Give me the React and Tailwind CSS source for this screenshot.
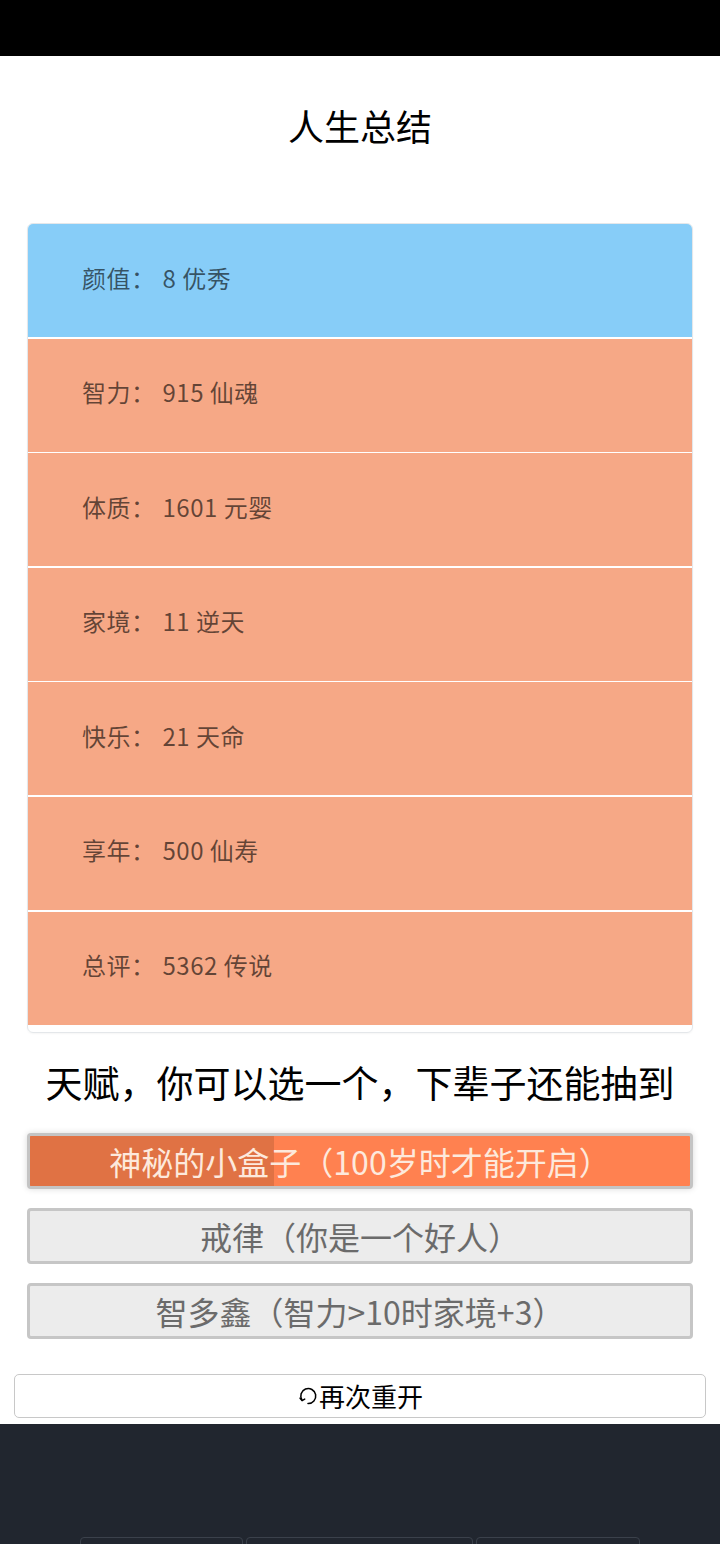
import React from "react";

const font = { fontFamily: '"Noto Sans CJK SC", "Noto Sans", sans-serif' };

const stats = [
  { label: "颜值", value: "8 优秀", blue: true },
  { label: "智力", value: "915 仙魂" },
  { label: "体质", value: "1601 元婴" },
  { label: "家境", value: "11 逆天" },
  { label: "快乐", value: "21 天命" },
  { label: "享年", value: "500 仙寿" },
  { label: "总评", value: "5362 传说" },
];

const talents = [
  { name: "戒律（你是一个好人）" },
  { name: "智多鑫（智力>10时家境+3）" },
];

function RefreshIcon() {
  return (
    <svg width="22" height="22" viewBox="0 0 20 20" fill="none" stroke="currentColor" strokeWidth="1.4">
      <path d="M4.6 13.8 A6.8 6.8 0 1 1 10 16.8" strokeLinecap="round" />
      <path d="M2.8 12 L4.6 14.2 L7 12.8" strokeLinecap="round" strokeLinejoin="round" />
    </svg>
  );
}

export default function App() {
  return (
    <div className="w-[720px] h-[1544px] overflow-hidden bg-white flex flex-col" style={font}>
      {/* status bar */}
      <div className="h-[56px] bg-black shrink-0" />

      <div className="flex-1 flex flex-col">
        <h1 className="mt-[42px] text-center text-[36px] leading-[54px] text-black font-normal">人生总结</h1>

        {/* summary card */}
        <div className="mt-[71px] mx-[27px] border border-[#e4e7ea] rounded-[6px] overflow-hidden pb-[7px] shadow-[0_1px_2px_rgba(0,0,0,0.04)]">
          <div className="flex flex-col gap-[1.6px]">
            {stats.map((s) => (
              <div
                key={s.label}
                className={
                  "h-[113px] flex items-center pl-[54px] pb-[6px] text-[24px] tracking-[0.5px] text-black/60 " +
                  (s.blue ? "bg-[#87cdf8]" : "bg-[#f6a886]")
                }
              >
                {s.label}：<span className="ml-[7px]">{s.value}</span>
              </div>
            ))}
          </div>
        </div>

        <div className="mt-[22px] text-center text-[37px] leading-[54px] text-black">
          天赋，你可以选一个，下辈子还能抽到
        </div>

        {/* talents */}
        <div className="mt-[24px] mx-[27px] flex flex-col gap-[19px]">
          <div className="relative h-[56px] border-[3px] border-[#c4c4c4] rounded-[4px] bg-[#ff8150] overflow-hidden shadow-[0_0_6px_rgba(0,0,0,0.15)]">
            <div className="absolute left-0 top-0 bottom-0 w-[244px] bg-[#e07244]" />
            <div className="relative h-full flex items-center justify-center text-[32px] text-[#fde9dc]">
              神秘的小盒子（100岁时才能开启）
            </div>
          </div>
          {talents.map((t) => (
            <div
              key={t.name}
              className="h-[56px] border-[3px] border-[#c6c6c6] rounded-[4px] bg-[#ececec] flex items-center justify-center text-[32px] text-[#6b6b6b]"
            >
              {t.name}
            </div>
          ))}
        </div>

        {/* restart */}
        <div className="mt-[35px] mx-[14px] h-[44px] border border-[#c8c8c8] rounded-[5px] flex items-center justify-center text-[26px] text-black">
          <RefreshIcon />
          <span>再次重开</span>
        </div>
      </div>

      {/* footer */}
      <div className="h-[120px] mt-[6px] bg-[#21262f] shrink-0 overflow-hidden">
        <div className="mt-[113px] ml-[80px] flex gap-[3px]">
          <div className="w-[163px] h-[30px] border border-[#3b414b] rounded-[4px]" />
          <div className="w-[227px] h-[30px] border border-[#3b414b] rounded-[4px]" />
          <div className="w-[164px] h-[30px] border border-[#3b414b] rounded-[4px]" />
        </div>
      </div>
    </div>
  );
}
